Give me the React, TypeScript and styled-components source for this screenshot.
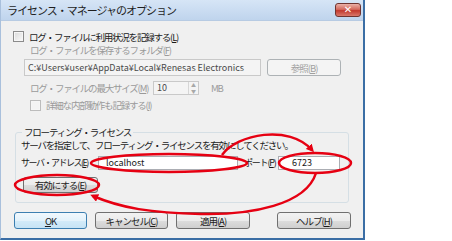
import styled, { createGlobalStyle, css } from "styled-components"

const GlobalStyle = createGlobalStyle`
    body {
        margin: 0;
        background: #fff;
        font-family: "Noto Sans CJK JP", "Noto Sans", sans-serif;
        color: #1a1a1a;
    }
`

const Window = styled.div`
    position: relative;
    width: 365px;
    height: 240px;
    box-sizing: border-box;
    background: #f0f0f0;
    border-left: 1px solid #a9c0dc;
    border-right: 2px solid #3b6ea5;
    border-bottom: 2px solid #3b6ea5;
    display: flex;
    flex-direction: column;
`

const TitleBar = styled.div`
    height: 21px;
    flex: none;
    display: flex;
    align-items: center;
    justify-content: space-between;
    padding-left: 6px;
    background: linear-gradient(#d6e5f6, #bfd4ed);
    border-bottom: 1px solid #b7cbe3;
    box-sizing: border-box;
`

const Title = styled.span`
    font-size: 11px;
    letter-spacing: -1px;
    color: #1e1e1e;
`

const CloseButton = styled.div`
    width: 24px;
    height: 12px;
    margin-right: 2px;
    border: 1px solid #6f3430;
    border-radius: 3px;
    background: linear-gradient(#eab1a8, #d46a5e 45%, #c2392e 55%, #d9786b);
    display: flex;
    align-items: center;
    justify-content: center;
    color: #fff;
    font: bold 10px "DejaVu Sans", sans-serif;
    line-height: 1;
`

const Content = styled.div`
    display: flex;
    flex-direction: column;
`

const Row = styled.div<{ $top: number; $left: number; $h: number }>`
    display: flex;
    align-items: center;
    margin-top: ${p => p.$top}px;
    padding-left: ${p => p.$left}px;
    height: ${p => p.$h}px;
`

const Label = styled.span<{ $disabled?: boolean; $w?: number; $gap?: number; $spacing?: number; $size?: number }>`
    font-size: ${p => p.$size ?? 9.5}px;
    line-height: 12px;
    letter-spacing: ${p => p.$spacing ?? -1.2}px;
    white-space: nowrap;
    flex: none;
    width: ${p => (p.$w ? `${p.$w}px` : "auto")};
    margin-left: ${p => p.$gap ?? 0}px;
    color: ${p => (p.$disabled ? "#9a9a9a" : "#1a1a1a")};
`

const Check = styled.span<{ $disabled?: boolean }>`
    width: 9px;
    height: 9px;
    flex: none;
    border: 1px solid ${p => (p.$disabled ? "#bcbcbc" : "#8b8b8b")};
    background: ${p =>
        p.$disabled ? "#f4f4f4" : "linear-gradient(135deg, #d9d9d9, #fafafa)"};
    box-shadow: inset 0 0 0 1px #f6f6f6;
    margin-right: 5px;
`

const TextBox = styled.div<{ $w: number; $pad?: number; $disabled?: boolean }>`
    width: ${p => p.$w}px;
    height: 100%;
    box-sizing: border-box;
    flex: none;
    display: flex;
    align-items: center;
    padding-left: ${p => p.$pad ?? 3}px;
    border: 1px solid ${p => (p.$disabled ? "#c9c9c9" : "#abadb3")};
    background: ${p => (p.$disabled ? "#f4f4f4" : "#fff")};
    font-size: 9px;
    line-height: 12px;
    color: ${p => (p.$disabled ? "#4a4a4a" : "#1a1a1a")};
    white-space: nowrap;
    overflow: hidden;
`

const Spin = styled.div`
    margin-left: auto;
    width: 9px;
    height: 100%;
    display: flex;
    flex-direction: column;
    border-left: 1px solid #d6d6d6;
    font-size: 5px;
    color: #a8a8a8;
    line-height: 6px;
    text-align: center;
`

const Button = styled.div<{ $w: number; $gap?: number; $variant?: "default" | "disabled" }>`
    width: ${p => p.$w}px;
    height: 100%;
    margin-left: ${p => p.$gap ?? 0}px;
    box-sizing: border-box;
    flex: none;
    display: flex;
    align-items: center;
    justify-content: center;
    border: 1px solid #707070;
    border-radius: 3px;
    background: linear-gradient(#f2f2f2, #ebebeb 50%, #dddddd 51%, #cfcfcf);
    font-size: 9.5px;
    line-height: 12px;
    letter-spacing: -1px;
    color: #1a1a1a;
    ${p =>
        p.$variant === "default" &&
        css`
            border-color: #3c7fb1;
            background: linear-gradient(#f1f8fd, #e3f2fb 50%, #d3ebf9 51%, #c6e3f5);
        `}
    ${p =>
        p.$variant === "disabled" &&
        css`
            border-color: #adb2b5;
            background: #f4f4f4;
            color: #a0a0a0;
        `}
`

const Group = styled.fieldset`
    margin: 16px 0 0 14px;
    width: 334px;
    height: 76px;
    box-sizing: border-box;
    padding: 0 5px;
    border: 1px solid #d5dfe5;
    border-radius: 3px;
    display: flex;
    flex-direction: column;
`

const Legend = styled.legend`
    padding: 0 2px;
    margin-left: 1px;
    font-size: 9.5px;
    letter-spacing: -1.2px;
    line-height: 10px;
`

const Footer = styled.div`
    display: flex;
    margin-top: 9px;
    padding-left: 13px;
    height: 17px;
    gap: 8px;
`

const Overlay = styled.svg`
    position: absolute;
    left: 0;
    top: 0;
    pointer-events: none;
`

function Annotations() {
    return (
        <Overlay width={365} height={240}>
            <defs>
                <marker id="head" markerWidth="8" markerHeight="8" refX="5" refY="4" orient="auto" markerUnits="userSpaceOnUse">
                    <path d="M0 0 L8 4 L0 8 Z" fill="#e60012" />
                </marker>
            </defs>
            <g fill="none" stroke="#e60012" strokeWidth={2.5}>
                <ellipse cx={168} cy={163} rx={78} ry={9} />
                <ellipse cx={314} cy={163} rx={36} ry={10} />
                <ellipse cx={56} cy={185} rx={42} ry={10} />
                <path d="M221 155 C236 134 288 124 311 150" markerEnd="url(#head)" />
                <path d="M315 173 C305 205 250 215 200 214 S120 208 92 196" markerEnd="url(#head)" />
            </g>
        </Overlay>
    )
}

export default function App() {
    return (
        <>
            <GlobalStyle />
            <Window>
                <TitleBar>
                    <Title>ライセンス・マネージャのオプション</Title>
                    <CloseButton>✕</CloseButton>
                </TitleBar>
                <Content>
                    <Row $top={9} $left={12} $h={13}>
                        <Check />
                        <Label>ログ・ファイルに利用状況を記録する(<u>L</u>)</Label>
                    </Row>
                    <Row $top={1} $left={29} $h={12}>
                        <Label $disabled>ログ・ファイルを保存するフォルダ(<u>F</u>)</Label>
                    </Row>
                    <Row $top={3} $left={23} $h={17}>
                        <TextBox $w={237} $disabled>C:¥Users¥user¥AppData¥Local¥Renesas Electronics</TextBox>
                        <Button $w={74} $gap={6} $variant="disabled">参照(<u>B</u>)</Button>
                    </Row>
                    <Row $top={5} $left={29} $h={14}>
                        <Label $disabled $w={123}>ログ・ファイルの最大サイズ(<u>M</u>)</Label>
                        <TextBox $w={46} $disabled>
                            10
                            <Spin>
                                <span>▲</span>
                                <span>▼</span>
                            </Spin>
                        </TextBox>
                        <Label $disabled $gap={12}>MB</Label>
                    </Row>
                    <Row $top={4} $left={29} $h={12}>
                        <Check $disabled />
                        <Label $disabled>詳細な内部動作も記録する(<u>I</u>)</Label>
                    </Row>
                    <Group>
                        <Legend>フローティング・ライセンス</Legend>
                        <Row $top={2} $left={0} $h={12}>
                            <Label>サーバを指定して、フローティング・ライセンスを有効にしてください。</Label>
                        </Row>
                        <Row $top={5} $left={0} $h={14}>
                            <Label $w={77} $size={9} $spacing={-1.5}>サーバ・アドレス(<u>E</u>)</Label>
                            <TextBox $w={140} $pad={7}>localhost</TextBox>
                            <Label $w={34} $gap={6} $size={9} $spacing={-1.2}>ポート(<u>P</u>)</Label>
                            <TextBox $w={62} $pad={13}>6723</TextBox>
                        </Row>
                        <Row $top={7} $left={2} $h={16}>
                            <Button $w={75}>有効にする(<u>E</u>)</Button>
                        </Row>
                    </Group>
                    <Footer>
                        <Button $w={73} $variant="default"><u>O</u>K</Button>
                        <Button $w={73}>キャンセル(<u>C</u>)</Button>
                        <Button $w={74}>適用(<u>A</u>)</Button>
                        <Button $w={74} $gap={19}>ヘルプ(<u>H</u>)</Button>
                    </Footer>
                </Content>
                <Annotations />
            </Window>
        </>
    )
}
